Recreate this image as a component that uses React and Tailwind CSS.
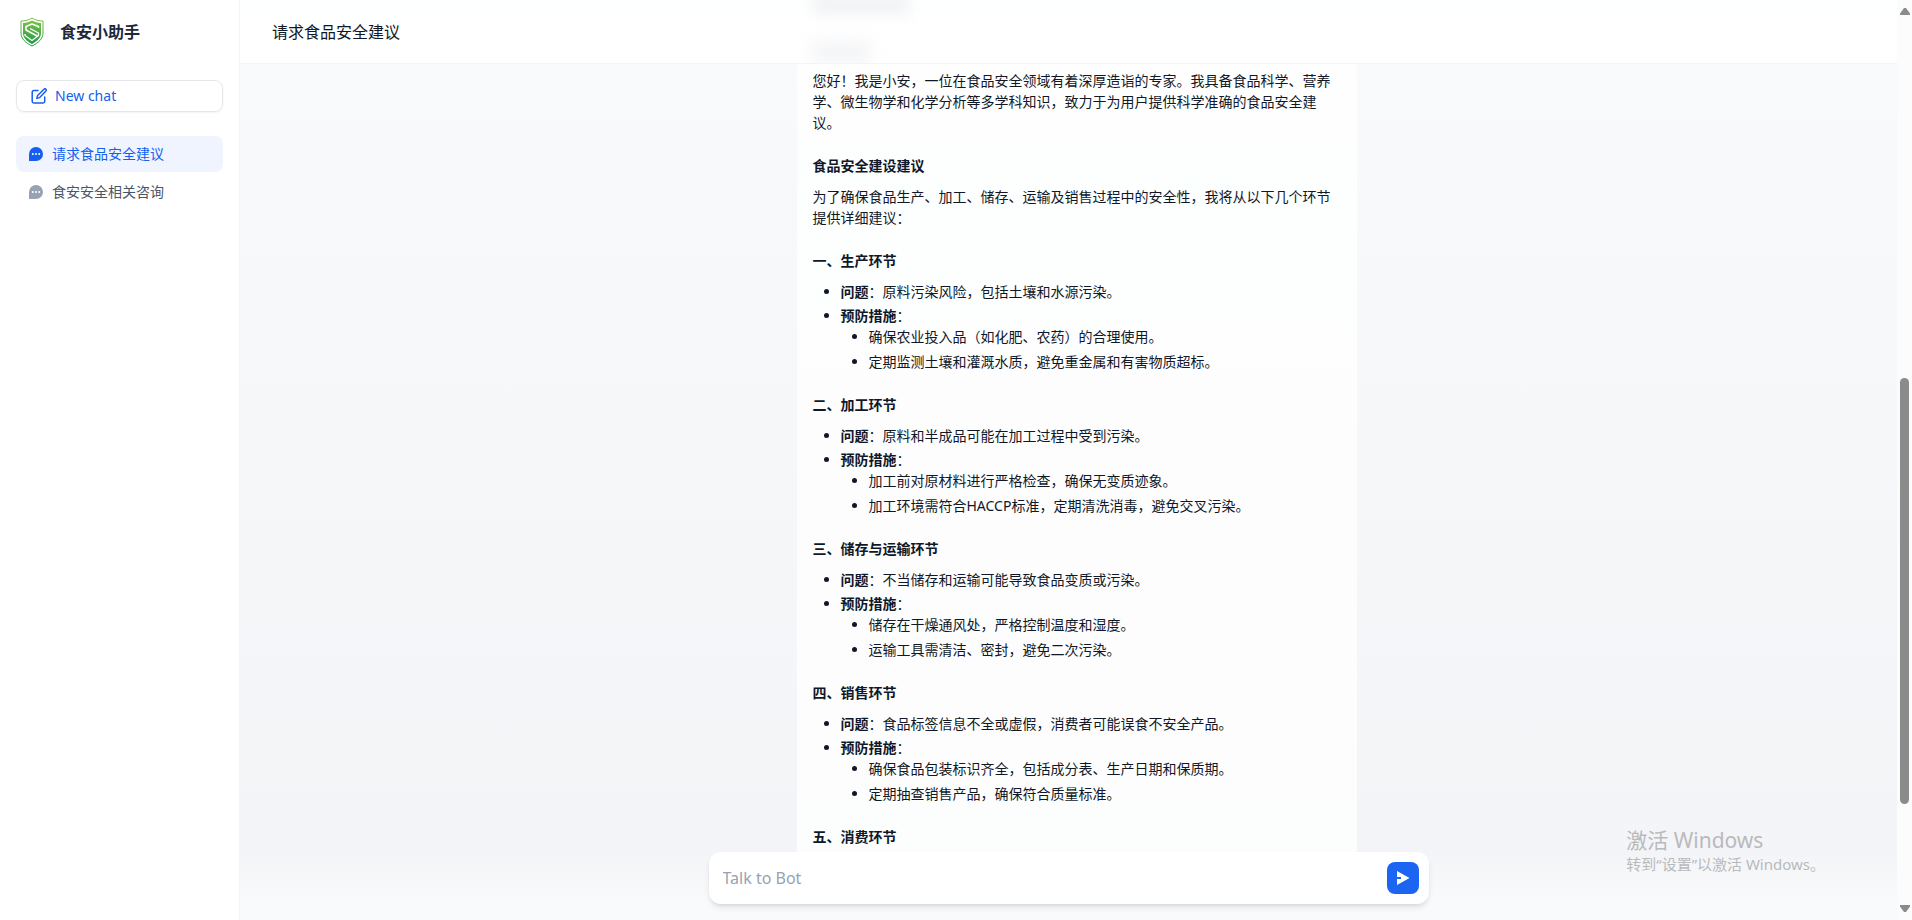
import React from 'react';

const conversations = [
  { id: 1, title: '请求食品安全建议', active: true },
  { id: 2, title: '食安安全相关咨询', active: false },
];

const sections = [
  {
    title: '一、生产环节',
    problem: '原料污染风险，包括土壤和水源污染。',
    measures: ['确保农业投入品（如化肥、农药）的合理使用。', '定期监测土壤和灌溉水质，避免重金属和有害物质超标。'],
  },
  {
    title: '二、加工环节',
    problem: '原料和半成品可能在加工过程中受到污染。',
    measures: ['加工前对原材料进行严格检查，确保无变质迹象。', '加工环境需符合HACCP标准，定期清洗消毒，避免交叉污染。'],
  },
  {
    title: '三、储存与运输环节',
    problem: '不当储存和运输可能导致食品变质或污染。',
    measures: ['储存在干燥通风处，严格控制温度和湿度。', '运输工具需清洁、密封，避免二次污染。'],
  },
  {
    title: '四、销售环节',
    problem: '食品标签信息不全或虚假，消费者可能误食不安全产品。',
    measures: ['确保食品包装标识齐全，包括成分表、生产日期和保质期。', '定期抽查销售产品，确保符合质量标准。'],
  },
  { title: '五、消费环节' },
];

const Logo = () => (
  <svg width="24" height="30" viewBox="0 0 24 30" fill="none" className="shrink-0">
    <defs>
      <linearGradient id="shield" x1="0" y1="0" x2="0" y2="1">
        <stop offset="0" stopColor="#7cc244" />
        <stop offset="1" stopColor="#1f9a48" />
      </linearGradient>
    </defs>
    <path d="M12 1c3 2 7 3 11 3v12c0 6-5 10-11 13C6 26 1 22 1 16V4c4 0 8-1 11-3z" stroke="url(#shield)" strokeWidth="1" />
    <path d="M12 3.5c3 1.500 5.500 2.200 9 2.500v10c0 5-4 8.300-9 11-5-2.700-9-6-9-11V6c3.500-.3 6-1 9-2.500z" fill="url(#shield)" />
    <path d="M18.5 11V9.500L12 7 6 9.500v3.500l12 6.500" stroke="#fff" strokeWidth="1.600" strokeLinejoin="round" />
    <path d="M10 11.500l8.500 4.500v2.500L12 23.500 5 18.500v-1.500" stroke="#fff" strokeWidth="1.300" strokeLinejoin="round" />
  </svg>
);

const EditIcon = () => (
  <svg width="16" height="16" viewBox="0 0 16 16" fill="none" stroke="currentColor" strokeWidth="1.500" strokeLinecap="round" strokeLinejoin="round">
    <path d="M7 2.500H3A1.800 1.800 0 0 0 1.200 4.300v8.900A1.800 1.800 0 0 0 3 15h8.900a1.800 1.800 0 0 0 1.800-1.800V9" />
    <path d="M13 1.200a1.300 1.300 0 0 1 1.900 1.900L8.700 9.600l-2.900.8.800-2.900z" />
  </svg>
);

const ChatIcon = () => (
  <svg width="14" height="14" viewBox="0 0 14 14" className="shrink-0">
    <path d="M7 0a7 7 0 1 1 0 14H.6a.6.6 0 0 1-.6-.6V7a7 7 0 0 1 7-7z" fill="currentColor" />
    <circle cx="3.8" cy="7" r="1" fill="#fff" />
    <circle cx="7" cy="7" r="1" fill="#fff" />
    <circle cx="10.2" cy="7" r="1" fill="#fff" />
  </svg>
);

const SendIcon = () => (
  <svg width="14" height="14" viewBox="0 0 14 14" fill="currentColor">
    <path d="M1 0L13.500 7L1 14V8H5V6H1z" />
  </svg>
);

const Sidebar = () => (
  <aside className="w-60 shrink-0 bg-white border-r border-gray-100 px-4">
    <div className="h-16 flex items-center gap-4 px-1">
      <Logo />
      <h1 className="text-base font-bold text-gray-800">食安小助手</h1>
    </div>
    <button className="mt-4 w-full h-8 px-3.5 flex items-center gap-2 rounded-lg border border-gray-200 shadow-xs text-sm text-[#155eef]">
      <EditIcon />
      New chat
    </button>
    <nav className="mt-6 space-y-0.5">
      {conversations.map(item => (
        <a
          key={item.id}
          href="#"
          className={`flex items-center gap-[9px] h-9 px-[13px] rounded-lg text-sm ${
            item.active ? 'bg-[#eff4ff] text-[#155eef]' : 'text-gray-600'
          }`}
        >
          <span className={item.active ? 'text-[#155eef]' : 'text-[#98a2b3]'}>
            <ChatIcon />
          </span>
          {item.title}
        </a>
      ))}
    </nav>
  </aside>
);

const Section = ({ title, problem, measures }) => (
  <section className="mt-[22px]">
    <h3 className="font-bold">{title}</h3>
    {problem && (
      <ul className="mt-2.5 list-disc pl-7 space-y-[3px]">
        <li>
          <strong>问题</strong>：{problem}
        </li>
        <li>
          <strong>预防措施</strong>：
          <ul className="list-disc pl-7 space-y-1">
            {measures.map(text => (
              <li key={text}>{text}</li>
            ))}
          </ul>
        </li>
      </ul>
    )}
  </section>
);

const Answer = () => (
  <article className="bg-white/80 px-4 pt-1.5 pb-4 text-sm leading-[21px] text-gray-900">
    <p>
      您好！我是小安，一位在食品安全领域有着深厚造诣的专家。我具备食品科学、营养学、微生物学和化学分析等多学科知识，致力于为用户提供科学准确的食品安全建议。
    </p>
    <h3 className="mt-[22px] font-bold">食品安全建设建议</h3>
    <p className="mt-2.5">为了确保食品生产、加工、储存、运输及销售过程中的安全性，我将从以下几个环节提供详细建议：</p>
    {sections.map(section => (
      <Section key={section.title} {...section} />
    ))}
  </article>
);

const Composer = () => (
  <div className="shrink-0 pb-4 px-4 bg-linear-to-b from-transparent to-[#f9fafb] to-70%">
    <form className="max-w-[720px] mx-auto h-13 pl-3.5 pr-2.5 flex items-center bg-white rounded-xl shadow-md">
      <input
        type="text"
        aria-label="Talk to Bot"
        placeholder="Talk to Bot"
        className="flex-1 text-base outline-none placeholder:text-[#98a2b3]"
      />
      <button type="button" aria-label="Send" className="size-8 flex items-center justify-center rounded-lg bg-[#1c64f2] text-white">
        <SendIcon />
      </button>
    </form>
  </div>
);

const Scrollbar = () => (
  <div className="w-[15px] shrink-0 flex flex-col items-center bg-[#fcfcfc] py-2 text-[#8b8b8b]">
    <svg width="10" height="7" viewBox="0 0 10 7" fill="currentColor">
      <path d="M4 0h2l4 5.500V7H0V5.500z" />
    </svg>
    <div className="flex-[363]" />
    <div className="flex-[426] w-[9px] rounded-full bg-[#8b8b8b]" />
    <div className="flex-[101]" />
    <svg width="10" height="7" viewBox="0 0 10 7" fill="currentColor">
      <path d="M4 7h2l4-5.500V0H0v1.500z" />
    </svg>
  </div>
);

export default function App() {
  return (
    <div className="h-screen flex overflow-hidden bg-white font-['Noto_Sans','Noto_Sans_CJK_SC',sans-serif]">
      <Sidebar />
      <main className="relative flex-1 min-w-0 flex flex-col bg-linear-to-b from-[#f9fafb] to-[#f2f4f7]">
        <header className="relative h-16 shrink-0 flex items-center px-8 overflow-hidden bg-white/90 border-b border-gray-100 text-base text-gray-900">
          {/* message text scrolled under the frosted header */}
          <div className="absolute inset-0 px-4 flex justify-center">
            <div className="w-full max-w-[720px] pl-[104px]">
              <div className="w-24 h-2.5 bg-gray-200 blur-sm" />
              <div className="mt-8 w-14 h-5 bg-gray-100 blur-sm" />
            </div>
          </div>
          <h2 className="relative">请求食品安全建议</h2>
        </header>
        <div className="flex-1 min-h-0 overflow-hidden px-4">
          <div className="max-w-[720px] mx-auto pl-22 pr-18">
            <Answer />
          </div>
        </div>
        <Composer />
        <div className="absolute right-[72px] bottom-[46px] text-[#b9babc] pointer-events-none">
          <p className="text-[21px] leading-7">激活 Windows</p>
          <p className="text-[15px] leading-5">转到“设置”以激活 Windows。</p>
        </div>
      </main>
      <Scrollbar />
    </div>
  );
}
